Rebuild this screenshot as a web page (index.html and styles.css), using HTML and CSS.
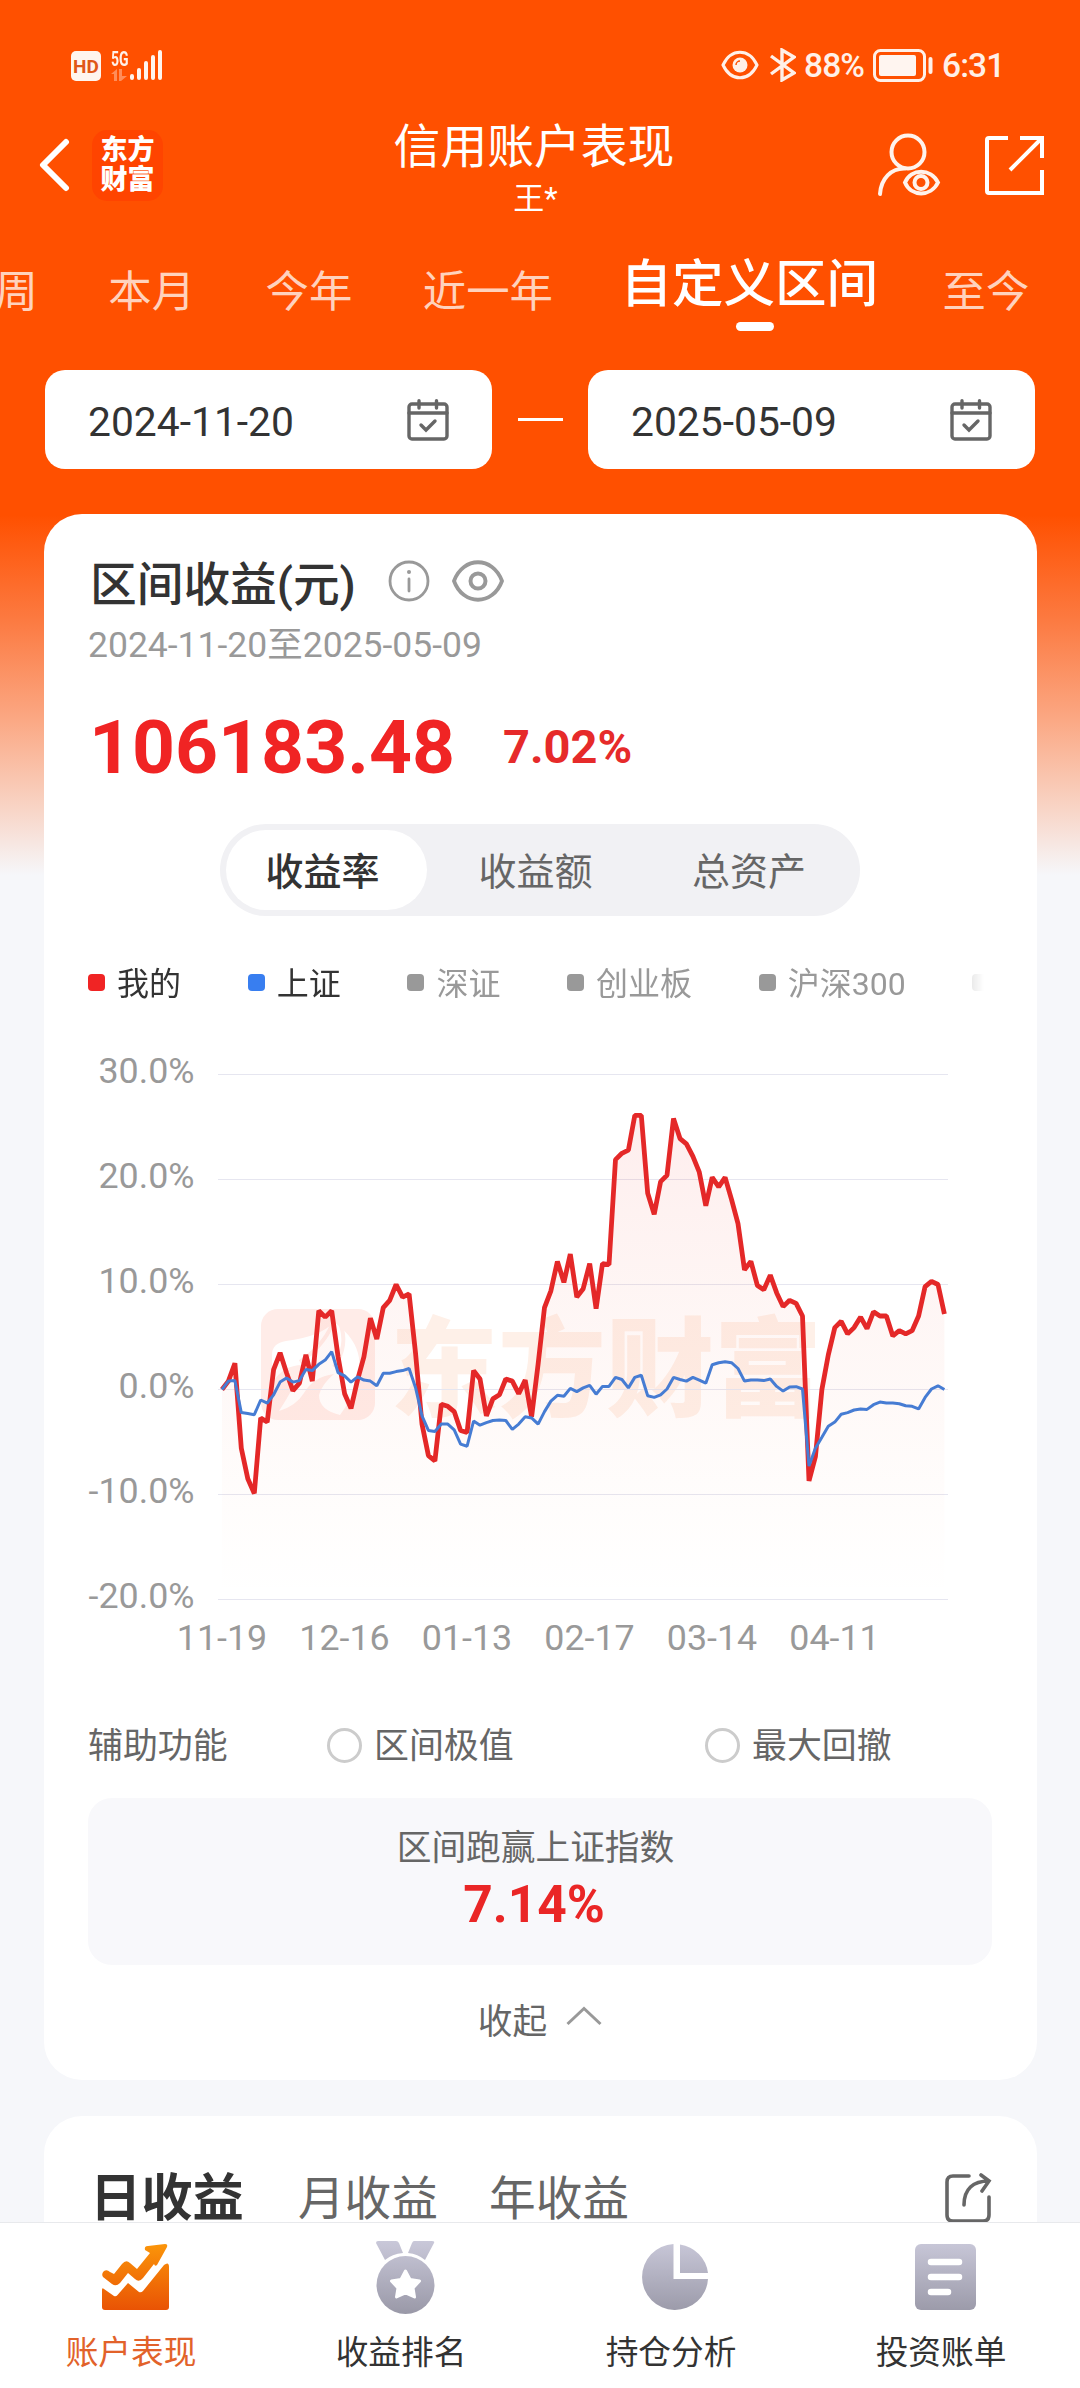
FILE: index.html
```html
<!DOCTYPE html>
<html lang="zh-CN">
<head>
    <meta charset="utf-8">
    <title>信用账户表现</title>
    <meta name="viewport" content="width=device-width, initial-scale=1">
    <link rel="stylesheet" href="styles.css">
</head>
<body>
    <div class="page">
        <div class="status">
            <div class="status-left">
                <span class="hd">HD</span>
                <div class="network">
                    <span>5G</span>
                    <svg width="17" height="12" viewBox="0 0 17 12" fill="#fff" opacity=".35"><path d="M0 5L6 0V12H3V5ZM8 0H11V7H16L10 12H8Z"/></svg>
                </div>
                <svg class="signal" width="34" height="32" viewBox="0 0 34 32" stroke="#fff5ee" stroke-width="4" stroke-linecap="round"><path d="M3 27V29M10 21V29M17 14V29M24 8V29M31 3V29"/></svg>
            </div>
            <div class="status-right">
                <svg width="38" height="30" viewBox="0 0 38 30" fill="none" stroke="#fff0e8" stroke-width="3"><path d="M2 15C10 -2 28 -2 36 15C28 32 10 32 2 15Z"/><circle cx="19" cy="15" r="7.5" fill="#fff0e8" stroke="none"/><path d="M15 15A4 4 0 0 1 19 11" stroke="#ff5000" stroke-width="1.5"/></svg>
                <svg class="bluetooth" width="27" height="34" viewBox="0 0 27 34" fill="none" stroke="#fff0e8" stroke-width="3.4"><path d="M2 8L25 25L13 32V2L25 9L2 26"/></svg>
                <span class="percent">88%</span>
                <svg class="battery" width="61" height="33" viewBox="0 0 61 33"><rect x="1.5" y="1.5" width="50" height="30" rx="6" fill="none" stroke="#fff0e8" stroke-width="3"/><rect x="6" y="6" width="37" height="21" rx="2" fill="#fff5f0"/><rect x="55.500" y="8" width="4" height="17" rx="2" fill="#fff0e8"/></svg>
                <span class="time">6:31</span>
            </div>
        </div>

        <header class="navbar">
            <div class="nav-left">
                <svg width="32" height="56" viewBox="0 0 32 56" fill="none" stroke="#fff" stroke-width="6" stroke-linecap="round" stroke-linejoin="round"><path d="M28 5L5 28L28 51"/></svg>
                <div class="brand">东方<br>财富</div>
            </div>
            <div class="nav-title">
                <h1>信用账户表现</h1>
                <p>王*</p>
            </div>
            <div class="nav-right">
                <svg width="64" height="64" viewBox="0 0 64 64" fill="none" stroke="#fff3ec" stroke-width="4" stroke-linecap="round"><circle cx="31" cy="19" r="16.500"/><path d="M3 61C4 46 14 35 28 35.500"/><path d="M28 49.500C34 35 54 35 61 49.500C54 64 34 64 28 49.500Z"/><circle cx="44" cy="49.500" r="6.500"/></svg>
                <svg width="60" height="60" viewBox="0 0 60 60" fill="none" stroke="#fff" stroke-width="4"><path d="M24 3H5Q3 3 3 5V56Q3 58 5 58H58V35M36 3H58V23M58 3L26 35"/></svg>
            </div>
        </header>

        <nav class="periods">
            <a>本周</a>
            <a>本月</a>
            <a>今年</a>
            <a>近一年</a>
            <a class="current">自定义区间</a>
            <a>至今</a>
        </nav>

        <div class="dates">
            <div class="date">
                <span>2024-11-20</span>
                <svg width="42" height="42" viewBox="0 0 42 42" fill="none" stroke="#666" stroke-width="3.400" stroke-linecap="round"><rect x="2" y="5" width="38" height="35" rx="3"/><path d="M2 14H40M12 1.700V9M29.500 1.700V9M14 26L19 31L28 22"/></svg>
            </div>
            <i class="dash"></i>
            <div class="date">
                <span>2025-05-09</span>
                <svg width="42" height="42" viewBox="0 0 42 42" fill="none" stroke="#666" stroke-width="3.400" stroke-linecap="round"><rect x="2" y="5" width="38" height="35" rx="3"/><path d="M2 14H40M12 1.700V9M29.500 1.700V9M14 26L19 31L28 22"/></svg>
            </div>
        </div>

        <main>
            <section class="card">
                <div class="card-title">
                    <h2>区间收益(元)</h2>
                    <svg width="42" height="42" viewBox="0 0 42 42" fill="none" stroke="#999" stroke-width="2.800" stroke-linecap="round"><circle cx="21" cy="21" r="19"/><path d="M21 19V31"/><circle cx="21" cy="12" r="2" fill="#999" stroke="none"/></svg>
                    <svg width="52" height="42" viewBox="0 0 52 42" fill="none" stroke="#999" stroke-width="3.800"><path d="M2 21C11 -4 41 -4 50 21C41 46 11 46 2 21Z"/><circle cx="26" cy="21" r="7.500" stroke-width="4"/></svg>
                </div>
                <p class="range">2024-11-20至2025-05-09</p>
                <div class="amounts">
                    <strong class="amount">106183.48</strong>
                    <strong class="rate">7.02%</strong>
                </div>

                <div class="segments">
                    <span class="active">收益率</span>
                    <span>收益额</span>
                    <span>总资产</span>
                </div>

                <div class="legend">
                    <span class="on mine">我的</span>
                    <span class="on sh">上证</span>
                    <span>深证</span>
                    <span>创业板</span>
                    <span>沪深300</span>
                    <span></span>
                </div>

                <svg class="chart" width="904" height="630" viewBox="0 0 904 630">
                    <defs>
                        <linearGradient id="area" gradientUnits="userSpaceOnUse" x1="0" y1="75" x2="0" y2="559">
                            <stop offset="0" stop-color="#ef2424" stop-opacity=".08"/>
                            <stop offset=".65" stop-color="#f55b30" stop-opacity=".03"/>
                            <stop offset="1" stop-color="#ff9060" stop-opacity="0"/>
                        </linearGradient>
                    </defs>
                    <g class="watermark">
                        <rect x="173" y="269" width="114" height="111" rx="17"/>
                        <path class="cut" d="M184 315Q184 303 198 301Q232 297 246 282Q268 298 271 318Q274 345 252 375Q231 370 231 355Q234 344 246 334Q225 337 216 353Q208 366 191 371Q206 348 216 325Q196 324 184 343Z"/>
                        <path class="streak" d="M244 285Q235 306 212 322M252 283Q261 305 246 327" />
                        <text x="302" y="368">东方财富</text>
                    </g>
                    <g id="grid"></g>
                    <path id="areaPath" fill="url(#area)"/>
                    <polyline id="mineLine" class="line mine-line"/>
                    <polyline id="shLine" class="line sh-line"/>
                </svg>

                <div class="helpers">
                    <span class="helper-label">辅助功能</span>
                    <label><i class="radio"></i>区间极值</label>
                    <label><i class="radio"></i>最大回撤</label>
                </div>

                <div class="beat">
                    <p>区间跑赢上证指数</p>
                    <strong>7.14%</strong>
                </div>

                <div class="collapse">
                    <span>收起</span>
                    <svg width="36" height="20" viewBox="0 0 36 20" fill="none" stroke="#999" stroke-width="3"><path d="M1.500 18L18 2.500L34.500 18"/></svg>
                </div>
            </section>

            <section class="card profit">
                <span class="active">日收益</span>
                <span>月收益</span>
                <span>年收益</span>
                <svg width="48" height="50" viewBox="0 0 48 50" fill="none" stroke="#666" stroke-width="3.600" stroke-linecap="round"><path d="M25 3H9Q3 3 3 9V42Q3 48 9 48H39Q45 48 45 42V24M20 32C20 16 29 8 45 8M37 2L45 8L38 18"/></svg>
            </section>
        </main>

        <footer class="tabbar">
            <a class="active">
                <svg width="80" height="80" viewBox="0 0 80 80">
                    <defs><linearGradient id="orange" x1="0" y1="7" x2="0" y2="74" gradientUnits="userSpaceOnUse"><stop offset="0" stop-color="#fb960a"/><stop offset="1" stop-color="#e95304"/></linearGradient></defs>
                    <path fill="url(#orange)" d="M7 54Q7 51 9 53L19 60Q21 61 22.500 59L33 47L44 56Q46 57 48 55L69 29Q74 25 74 31V71Q74 74 71 74H10Q7 74 7 71Z"/>
                    <path fill="url(#orange)" d="M9 35Q12 33 15 36L19 38L27 28Q31 23 35 27L42 33L55 17L50 14Q49 10 53 10L70 8Q73 8 72 11L62 29Q60 31 59 28L48 42Q44 47 40 43L33 37L25 47Q21 51 17 48L8 41Q6 38 9 35Z"/>
                </svg>
                <span>账户表现</span>
            </a>
            <a>
                <svg width="80" height="80" viewBox="0 0 80 80">
                    <defs><linearGradient id="grey" x1="0" y1="5" x2="0" y2="77" gradientUnits="userSpaceOnUse"><stop offset="0" stop-color="#c9c8d9"/><stop offset="1" stop-color="#9a99a8"/></linearGradient></defs>
                    <path fill="url(#grey)" d="M13 5H31Q33 5 34 7L38 17Q27 18 20 24L11 7Q11 5 13 5ZM49 5H67Q70 5 69 7L60 24Q53 18 43 17L47 7Q48 5 49 5Z"/>
                    <circle cx="40.500" cy="49" r="29" fill="url(#grey)"/>
                    <path fill="#fff" stroke="#fff" stroke-width="3" stroke-linejoin="round" d="M40.500 35L45 43.500L54.500 45L48 52L49.500 61L40.500 57L31.500 61L33 52L26.500 45L36 43.500Z"/>
                </svg>
                <span>收益排名</span>
            </a>
            <a>
                <svg width="80" height="80" viewBox="0 0 80 80">
                    <path fill="url(#grey)" d="M38.500 8V43H73A33 33 0 1 1 38.500 8ZM45 8.500A33 33 0 0 1 73 37H45Z"/>
                </svg>
                <span>持仓分析</span>
            </a>
            <a>
                <svg width="80" height="80" viewBox="0 0 80 80">
                    <rect x="10" y="8" width="61" height="66" rx="6" fill="url(#grey)"/>
                    <path stroke="#fff" stroke-width="6.500" stroke-linecap="round" d="M26 26H54M26 41H54M26 56H43"/>
                </svg>
                <span>投资账单</span>
            </a>
        </footer>
    </div>
    <script src="chart.js"></script>
</body>
</html>
```
FILE: styles.css
```css
* {
    box-sizing: border-box;
}

body {
    margin: 0;
    background-color: #f6f7fa;
    color: #333;
    font-family: Roboto, "Noto Sans CJK SC", sans-serif;
    font-size: 35px;
}

h1, h2, p {
    margin: 0;
    font-weight: 400;
}

svg {
    display: block;
    flex-shrink: 0;
}

.page {
    width: 1080px;
    height: 2388px;
    display: flex;
    flex-direction: column;
    overflow: hidden;
    background: linear-gradient(#ff5000 0, #ff5000 515px, #fc7a41 620px, #fba884 720px, #f8d5c7 810px, #f6f7fa 875px);
}

/* status bar */
.status {
    height: 100px;
    padding: 30px 72px 0 71px;
    display: flex;
    justify-content: space-between;
    align-items: center;
    color: #fff0e8;
}

.status-left, .status-right {
    display: flex;
    align-items: center;
}

.hd {
    width: 30px;
    height: 30px;
    margin-top: 2px;
    border-radius: 5px;
    background-color: #fff5ee;
    color: #e05818;
    font-size: 19px;
    font-weight: 700;
    line-height: 31px;
    text-align: center;
}

.network {
    width: 18px;
    margin-left: 10px;
    font-size: 20px;
    font-weight: 700;
    line-height: 20px;
    white-space: nowrap;
}

.network span {
    display: block;
    transform: scaleX(0.7);
    transform-origin: left;
}

.bluetooth {
    margin-left: 10px;
}

.percent, .time {
    padding-top: 2px;
    font-size: 33.500px;
    font-weight: 500;
    line-height: 40px;
    letter-spacing: -0.9px;
}

.percent {
    width: 69px;
    margin-left: 8px;
}

.time {
    width: 66px;
    margin-left: 8px;
}

/* title bar */
.navbar {
    height: 130px;
    padding: 0 36px 0 38px;
    display: grid;
    grid-template-columns: 340px 1fr 340px;
    align-items: center;
    color: #fff;
}

.nav-left, .nav-right {
    display: flex;
    align-items: center;
}

.nav-right {
    justify-content: flex-end;
    gap: 43px;
}

.brand {
    width: 71px;
    height: 71px;
    margin-left: 22px;
    padding-top: 5px;
    border-radius: 15px;
    background-color: #ff4400;
    font-size: 27px;
    font-weight: 900;
    line-height: 30px;
    text-align: center;
}

.nav-title {
    padding: 6px 14px 0 0;
    text-align: center;
    white-space: nowrap;
}

.nav-title h1 {
    font-size: 46.800px;
    line-height: 54px;
}

.nav-title p {
    margin-top: 7px;
    padding-left: 3px;
    font-size: 31px;
    line-height: 36px;
}

/* period tabs */
.periods {
    height: 110px;
    margin-left: -49px;
    display: flex;
    gap: 70.500px;
    white-space: nowrap;
}

.periods a {
    padding-top: 33px;
    color: #ffd2bd;
    font-size: 43.400px;
    line-height: 60px;
}

.periods .current {
    margin-left: -3px;
    margin-right: -6px;
    padding-top: 31px;
    color: #fff;
    font-size: 51.500px;
    font-weight: 500;
    line-height: 48px;
}

.periods .current::after {
    content: "";
    display: block;
    width: 38px;
    height: 9px;
    margin: 13px 0 0 115px;
    border-radius: 5px;
    background-color: #fff;
}

/* date pickers */
.dates {
    padding: 30px 45px 45px;
    display: flex;
    justify-content: space-between;
    align-items: center;
}

.date {
    width: 447px;
    height: 99px;
    padding: 4px 43px 0;
    display: flex;
    justify-content: space-between;
    align-items: center;
    border-radius: 20px;
    background-color: #fff;
    font-size: 40.800px;
}

.date svg {
    margin-top: -4px;
}

.dash {
    width: 45px;
    height: 3px;
    background-color: #fff;
}

/* cards */
main {
    flex: 1;
    min-height: 0;
    overflow: hidden;
    padding: 0 43px 0 44px;
}

.card {
    border-radius: 38px;
    background-color: #fff;
    padding: 42px 45px 34px 44px;
}

.card-title {
    height: 54px;
    display: flex;
    align-items: center;
}

.card-title h2 {
    width: 300px;
    padding: 4px 0 0 2px;
    font-size: 46.700px;
    font-weight: 500;
    line-height: 60px;
    white-space: nowrap;
}

.card-title svg {
    margin: -4px 22px 0 0;
}

.range {
    margin-top: 15px;
    color: #999;
    font-size: 35.500px;
    line-height: 40px;
}

.amounts {
    margin-top: 42px;
    display: flex;
    align-items: center;
    color: #f02424;
    line-height: 80px;
}

.amount {
    width: 415px;
    padding-left: 1px;
    font-size: 75px;
}

.rate {
    font-size: 47px;
    color: #e62a2a;
}

.segments {
    width: 640px;
    height: 92px;
    margin: 37px 0 0 132px;
    padding: 6px;
    display: grid;
    grid-template-columns: 201px 213px 1fr;
    column-gap: 6px;
    border-radius: 46px;
    background-color: #f1f1f4;
    color: #666;
    font-size: 38px;
    line-height: 84px;
    text-align: center;
}

.segments span {
    height: 80px;
    padding-right: 8px;
}

.segments .active {
    border-radius: 40px;
    background-color: #fff;
    color: #333;
    font-weight: 500;
}

.legend {
    width: 896px;
    height: 40px;
    margin-top: 47px;
    display: flex;
    gap: 66.700px;
    overflow: hidden;
    color: #999;
    font-size: 32px;
    line-height: 42px;
    white-space: nowrap;
    mask-image: linear-gradient(to right, #000 870px, rgba(0, 0, 0, 0.2) 884px, transparent 896px);
}

.legend span {
    flex-shrink: 0;
    display: flex;
}

.legend span::before {
    content: "";
    width: 17px;
    height: 17px;
    margin: 11px 12px 0 0;
    border-radius: 4px;
    background-color: #999;
}

.legend .on {
    color: #333;
}

.legend .mine::before {
    background-color: #f02424;
}

.legend .sh::before {
    background-color: #387ef0;
}

/* chart */
.chart {
    margin-top: 37px;
}

.chart text {
    fill: #999;
    font-size: 35.800px;
}

.grid-line {
    stroke: #e6e6f0;
    stroke-width: 1.2;
}

.axis-y {
    text-anchor: end;
}

.axis-x {
    text-anchor: middle;
}

.line {
    fill: none;
    stroke-linejoin: bevel;
}

.mine-line {
    stroke: #e42828;
    stroke-width: 4.8;
}

.sh-line {
    stroke: #467cd3;
    stroke-width: 3;
}

.watermark rect {
    fill: #ffece8;
}

.watermark .cut {
    fill: #fff;
}

.watermark .streak {
    fill: none;
    stroke: #ffece8;
    stroke-width: 4;
}

.chart .watermark text {
    fill: #fef0e8;
    font-size: 108px;
    font-weight: 900;
}

.helpers {
    height: 50px;
    margin-top: 51px;
    display: grid;
    grid-template-columns: 239px 378px 1fr;
    align-items: center;
    color: #666;
    font-size: 34.900px;
    line-height: 52px;
}

.helpers label {
    display: flex;
    align-items: center;
}

.radio {
    width: 35px;
    height: 35px;
    margin: -3px 12px 0 0;
    border: 3px solid #ccc;
    border-radius: 50%;
}

.beat {
    height: 167px;
    margin-top: 27px;
    padding: 30px 9px 0 0;
    border-radius: 24px;
    background-color: #f8f8fb;
    color: #666;
    font-size: 34.700px;
    line-height: 40px;
    text-align: center;
}

.beat strong {
    display: block;
    margin: 9px 3px 0 0;
    color: #ea2626;
    font-size: 51.500px;
    line-height: 56px;
}

.collapse {
    height: 50px;
    margin-top: 29px;
    margin-bottom: 2px;
    display: flex;
    justify-content: center;
    align-items: center;
    gap: 19px;
    color: #666;
    font-size: 34.700px;
}

.collapse svg {
    margin-top: -7px;
}

.profit {
    height: 300px;
    margin-top: 36px;
    padding-top: 52px;
    display: flex;
    align-items: flex-start;
    color: #666;
    font-size: 46.700px;
    line-height: 62px;
}

.profit span {
    margin-right: 51px;
    white-space: nowrap;
}

.profit .active {
    padding-left: 2px;
    margin-right: 54px;
    color: #333;
    font-size: 51.300px;
    font-weight: 700;
}

.profit svg {
    margin: 5px 0 0 auto;
}

/* bottom tab bar */
.tabbar {
    height: 166px;
    flex-shrink: 0;
    display: grid;
    grid-template-columns: repeat(4, 1fr);
    border-top: 1px solid #e8e9ec;
    background-color: #fff;
}

.tabbar a {
    padding-top: 13px;
    display: flex;
    flex-direction: column;
    align-items: center;
    font-size: 32.700px;
    line-height: 40px;
}

.tabbar span {
    margin-top: 17px;
    padding-right: 8px;
}

.tabbar .active {
    color: #e2622a;
}
```
FILE: chart.js
```js
const mine = [
    0, 0.8, 2.5, -5.6, -8.5, -9.9, -2.7, -3.1, 1.9, 3.5, 1.6, -0.1, 0.6, 3.3, 0.8, 7.5, 6.9, 7.5, 3.1, -0.4,
    -1.8, 0.9, 3.1, 6.8, 4.8, 7.8, 8.5, 10, 8.8, 9.1, 3.5, -3.3, -6.3, -6.8, -1.4, -1.6, -2.1, -3.9, -4.1, 1.8,
    1, -2.5, -0.9, -0.5, 1, 0.8, -0.4, 0.9, -2.6, 2.4, 7.8, 9.4, 12.2, 10.2, 12.9, 8.8, 9.6, 12, 7.7, 12,
    11.9, 21.9, 22.5, 22.8, 26.1, 26.1, 18.7, 16.7, 19.8, 20.4, 25.8, 23.9, 23.4, 22.2, 20.7, 17.5, 20.2, 19.3, 20.2, 18.1,
    15.8, 11.4, 12.2, 9.9, 9.5, 10.9, 9.2, 7.9, 8.5, 8.2, 7, -8.7, -6.4, 0, 3.3, 5.9, 6.5, 5.3, 5.9, 6.9,
    5.8, 7.4, 7, 7, 5.1, 5.6, 5.3, 5.6, 7, 9.8, 10.3, 10, 7.2
];
const sh = [
    0, 0.8, 0.85, -2.2, -2.3, -2.4, -1, -1.3, -0.5, 0.7, 1.1, 0.7, 0.85, 1.9, 1.8, 2.4, 2.8, 3.6, 1.6, 1.3,
    0.7, 1.2, 0.9, 0.8, 0.35, 1.55, 1.55, 1.7, 1.8, 2, 0.2, -2.5, -3.9, -4, -3.3, -3.3, -3.85, -5.2, -5.4, -3,
    -3.4, -3.15, -2.95, -2.9, -2.95, -3.8, -3.3, -2.6, -2.7, -3.3, -2.1, -1.1, -0.55, -0.65, 0.1, -0.2, 0.15, 0.4, -0.45, 0.3,
    0.3, 1.15, 0.95, 0.15, 1.15, 1.35, -0.6, -0.75, -0.5, 0.05, 1.15, 0.95, 0.8, 1.15, 0.9, 0.6, 2.35, 2.55, 2.65, 2.55,
    2, 0.8, 0.9, 0.9, 0.85, 1, 0.3, -0.15, 0.25, 0.27, 0.05, -7.3, -5.6, -4.55, -3.5, -3.1, -2.35, -2.2, -1.95, -1.85,
    -1.9, -1.45, -1.2, -1.3, -1.3, -1.35, -1.55, -1.6, -1.85, -0.75, 0.05, 0.35, 0
];
const dates = ["11-19", "12-16", "01-13", "02-17", "03-14", "04-11"];

const left = 134;
const step = 6.45;
const zero = 349.5;

function y(value) {
    return zero - value * 10.5;
}

function points(values) {
    return values.map((v, i) => (left + i * step).toFixed(1) + "," + y(v).toFixed(1)).join(" ");
}

let grid = "";
for (let v = 30; v >= -20; v -= 10) {
    grid += `<line class="grid-line" x1="130" x2="860" y1="${y(v)}" y2="${y(v)}"/>`;
    grid += `<text class="axis-y" x="106.500" y="${y(v) + 8.500}">${v.toFixed(1)}%</text>`;
}
dates.forEach((date, i) => {
    grid += `<text class="axis-x" x="${left + i * 122.500}" y="610">${date}</text>`;
});

document.getElementById("grid").innerHTML = grid;
document.getElementById("mineLine").setAttribute("points", points(mine));
document.getElementById("shLine").setAttribute("points", points(sh));
document.getElementById("areaPath").setAttribute("d", `M${left},${y(-20)} L${points(mine)} L${left + 112 * step},${y(-20)} Z`);
```
